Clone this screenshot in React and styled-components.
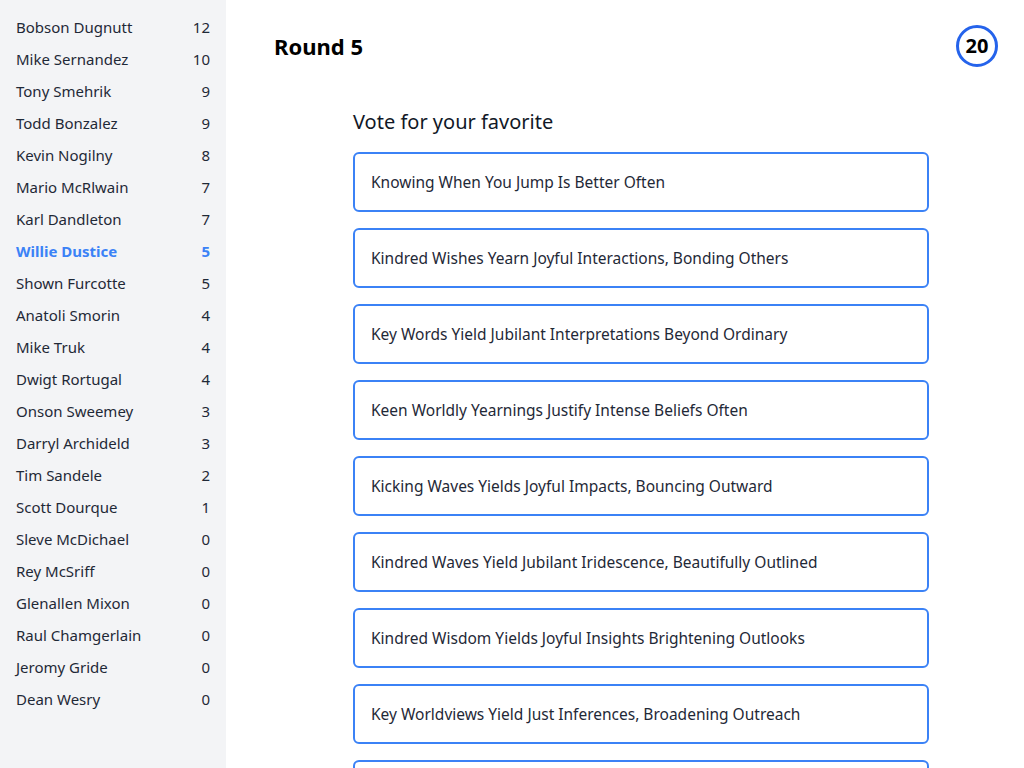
import React from "react";
import styled, { createGlobalStyle } from "styled-components";

const GlobalStyle = createGlobalStyle`
  html, body {
    margin: 0;
    padding: 0;
    background: #ffffff;
    font-family: "Noto Sans", "Open Sans", sans-serif;
    color: #111827;
  }
`;

const Layout = styled.div`
  display: flex;
  height: 768px;
  overflow: hidden;
`;

const Sidebar = styled.aside`
  width: 226px;
  flex-shrink: 0;
  background-color: #f3f4f6;
  padding: 11px 16px 0 16px;
  box-sizing: border-box;
`;

const PlayerRow = styled.div`
  display: flex;
  justify-content: space-between;
  align-items: center;
  height: 32px;
  font-size: 15px;
  font-weight: ${(p) => (p.$active ? 700 : 400)};
  color: ${(p) => (p.$active ? "#3b82f6" : "#1f2937")};
`;

const Main = styled.main`
  flex: 1;
  padding: 0 26px 0 48px;
`;

const Header = styled.div`
  display: flex;
  justify-content: space-between;
  align-items: center;
  height: 91px;
`;

const Title = styled.h1`
  margin: 0;
  font-size: 22px;
  font-weight: 700;
  color: #000;
`;

const Timer = styled.div`
  width: 42px;
  height: 42px;
  box-sizing: border-box;
  border: 3px solid #2563eb;
  border-radius: 50%;
  display: flex;
  align-items: center;
  justify-content: center;
  font-size: 20px;
  font-weight: 700;
  color: #000;
`;

const Poll = styled.section`
  width: 576px;
  margin-left: 79px;
  padding-top: 17px;
`;

const Prompt = styled.h2`
  margin: 0 0 16px 0;
  font-size: 20px;
  font-weight: 400;
  line-height: 28px;
  color: #111827;
`;

const Options = styled.div`
  display: flex;
  flex-direction: column;
  gap: 16px;
`;

const Option = styled.button`
  height: 60px;
  flex-shrink: 0;
  box-sizing: border-box;
  border: 2px solid #3b82f6;
  border-radius: 6px;
  background: #fff;
  padding: 0 16px;
  text-align: left;
  font-family: inherit;
  font-size: 15.5px;
  color: #1f2937;
  cursor: pointer;
`;

const players = [
  ["Bobson Dugnutt", 12],
  ["Mike Sernandez", 10],
  ["Tony Smehrik", 9],
  ["Todd Bonzalez", 9],
  ["Kevin Nogilny", 8],
  ["Mario McRlwain", 7],
  ["Karl Dandleton", 7],
  ["Willie Dustice", 5],
  ["Shown Furcotte", 5],
  ["Anatoli Smorin", 4],
  ["Mike Truk", 4],
  ["Dwigt Rortugal", 4],
  ["Onson Sweemey", 3],
  ["Darryl Archideld", 3],
  ["Tim Sandele", 2],
  ["Scott Dourque", 1],
  ["Sleve McDichael", 0],
  ["Rey McSriff", 0],
  ["Glenallen Mixon", 0],
  ["Raul Chamgerlain", 0],
  ["Jeromy Gride", 0],
  ["Dean Wesry", 0],
];

const options = [
  "Knowing When You Jump Is Better Often",
  "Kindred Wishes Yearn Joyful Interactions, Bonding Others",
  "Key Words Yield Jubilant Interpretations Beyond Ordinary",
  "Keen Worldly Yearnings Justify Intense Beliefs Often",
  "Kicking Waves Yields Joyful Impacts, Bouncing Outward",
  "Kindred Waves Yield Jubilant Iridescence, Beautifully Outlined",
  "Kindred Wisdom Yields Joyful Insights Brightening Outlooks",
  "Key Worldviews Yield Just Inferences, Broadening Outreach",
  "Kind Words Yield Joyful Interactions, Bringing Optimism",
];

const App = () => {
  return (
    <>
      <GlobalStyle />
      <Layout>
        <Sidebar>
          {players.map(([name, score]) => (
            <PlayerRow key={name} $active={name === "Willie Dustice"}>
              <span>{name}</span>
              <span>{score}</span>
            </PlayerRow>
          ))}
        </Sidebar>
        <Main>
          <Header>
            <Title>Round 5</Title>
            <Timer>20</Timer>
          </Header>
          <Poll>
            <Prompt>Vote for your favorite</Prompt>
            <Options>
              {options.map((o) => (
                <Option key={o}>{o}</Option>
              ))}
            </Options>
          </Poll>
        </Main>
      </Layout>
    </>
  );
};

export default App;
